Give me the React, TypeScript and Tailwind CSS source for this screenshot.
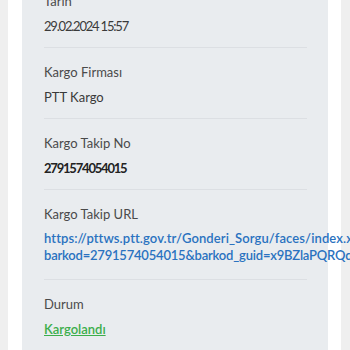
export default function App() {
  const rows = [
    { label: "Tarih", value: "29.02.2024 15:57", kind: "date" },
    { label: "Kargo Firması", value: "PTT Kargo", kind: "text" },
    { label: "Kargo Takip No", value: "2791574054015", kind: "bold" },
    { label: "Kargo Takip URL", value: "", kind: "url" },
    { label: "Durum", value: "Kargolandı", kind: "status" },
  ];

  return (
    <div className="h-[350px] w-[350px] overflow-hidden bg-[#efefef] pl-[8px] font-['Lato',sans-serif]">
      <div className="h-full w-[333px] bg-white px-[14px]">
        <div className="flex h-full w-[306px] flex-col bg-[#e9ecef] pl-[22px] pr-[21px]">
          <div className="-mt-[23px]">
            {rows.map((r, i) => (
              <div key={i} className="border-b border-[#dcdfe3]">
                {r.kind === "url" ? (
                  <div className="pt-[14px] pb-[15px]">
                    <div className="mb-[6px] text-[13px] leading-[20px] text-[#4a4a4a]">{r.label}</div>
                    <a className="block w-[330px] text-[13px] leading-[17px] font-semibold tracking-[0.1px] text-[#2a72c0]">
                      https://pttws.ptt.gov.tr/Gonderi_Sorgu/faces/index.xhtml?
                      <br />
                      <span className="tracking-[-0.2px]">barkod=2791574054015&amp;barkod_guid=x9BZlaPQRQq1gZ</span>
                    </a>
                  </div>
                ) : (
                  <div className="pt-[14px] pb-[11px]">
                    <div className="mb-[5px] text-[13px] leading-[20px] text-[#4a4a4a]">{r.label}</div>
                    {r.kind === "status" ? (
                      <div className="text-[13px] leading-[20px]">
                        <a className="font-semibold text-[#3cae4c] underline">{r.value}</a>
                      </div>
                    ) : r.kind === "bold" ? (
                      <div className="text-[13px] leading-[20px] font-bold tracking-[-1.2px] text-[#222]">{r.value}</div>
                    ) : r.kind === "date" ? (
                      <div className="text-[13px] leading-[20px] tracking-[-1.2px] text-[#3a3a3a]">{r.value}</div>
                    ) : (
                      <div className="text-[13px] leading-[20px] text-[#3a3a3a]">{r.value}</div>
                    )}
                  </div>
                )}
              </div>
            ))}
          </div>
        </div>
      </div>
    </div>
  );
}
